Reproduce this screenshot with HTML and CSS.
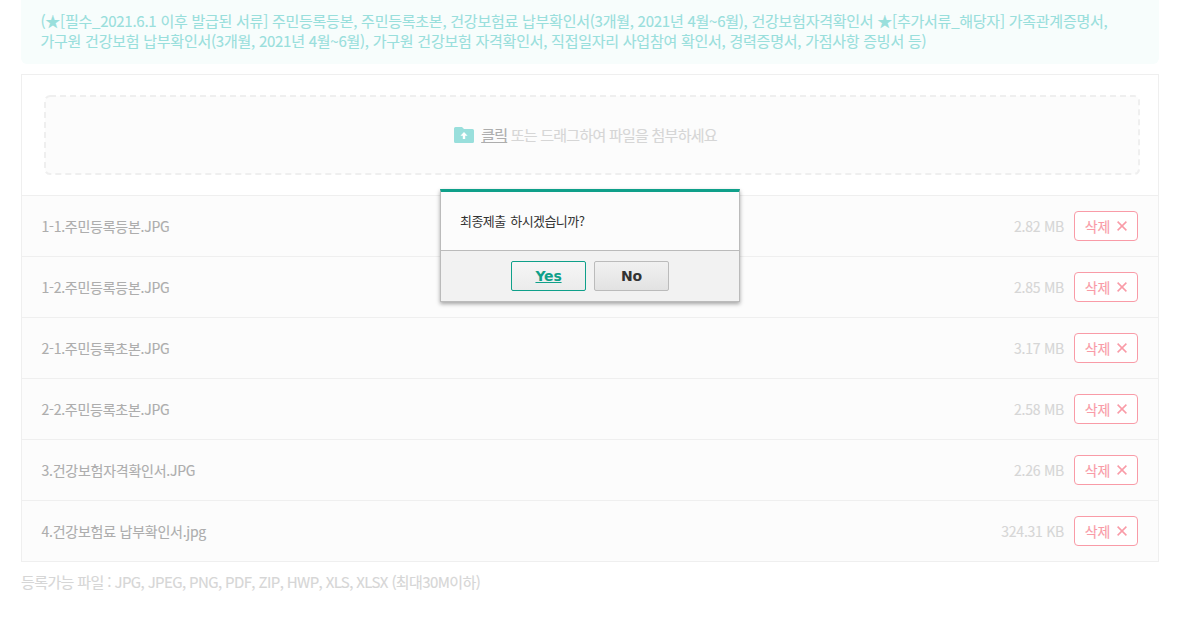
FILE: index.html
```html
<!DOCTYPE html>
<html lang="ko">
<head>
    <meta charset="UTF-8">
    <meta name="viewport" content="width=device-width, initial-scale=1.0">
    <title>첨부파일</title>
    <link rel="stylesheet" href="styles.css">
</head>
<body>
    <svg width="0" height="0" class="symbols">
        <symbol id="icon-close" viewBox="0 0 10 10">
            <path d="M0.6 0.6L9.4 9.4M9.4 0.6L0.6 9.4" fill="none" stroke="currentColor" stroke-width="1.5"/>
        </symbol>
    </svg>

    <div class="container">
        <div class="notice">
            <p>(★[필수_2021.6.1 이후 발급된 서류] 주민등록등본, 주민등록초본, 건강보험료 납부확인서(3개월, 2021년 4월~6월), 건강보험자격확인서 ★[추가서류_해당자] 가족관계증명서,</p>
            <p>가구원 건강보험 납부확인서(3개월, 2021년 4월~6월), 가구원 건강보험 자격확인서, 직접일자리 사업참여 확인서, 경력증명서, 가점사항 증빙서 등)</p>
        </div>

        <div class="upload">
            <div class="drop-area">
                <svg class="drop-line" width="1096" height="80">
                    <rect x="1" y="1" width="1094" height="78" rx="5" fill="#fcfcfc" stroke="#efefef" stroke-width="2" stroke-dasharray="6 4"/>
                </svg>
                <svg class="folder" width="20" height="16" viewBox="0 0 20 16">
                    <path d="M1.5 0H8L10 2H18.5Q20 2 20 3.5V14.5Q20 16 18.5 16H1.5Q0 16 0 14.5V1.5Q0 0 1.5 0Z" fill="#99dfdc"/>
                    <path d="M10 5L13.6 8.8H11.2V12H8.8V8.8H6.4Z" fill="#fff"/>
                </svg>
                <p class="drop-text"><a>클릭</a> 또는 드래그하여 파일을 첨부하세요</p>
            </div>
            <ul class="file-list">
                <li><span class="name">1-1.주민등록등본.JPG</span><span class="size">2.82 MB</span><button class="delete-btn">삭제<svg><use href="#icon-close"/></svg></button></li>
                <li><span class="name">1-2.주민등록등본.JPG</span><span class="size">2.85 MB</span><button class="delete-btn">삭제<svg><use href="#icon-close"/></svg></button></li>
                <li><span class="name">2-1.주민등록초본.JPG</span><span class="size">3.17 MB</span><button class="delete-btn">삭제<svg><use href="#icon-close"/></svg></button></li>
                <li><span class="name">2-2.주민등록초본.JPG</span><span class="size">2.58 MB</span><button class="delete-btn">삭제<svg><use href="#icon-close"/></svg></button></li>
                <li><span class="name">3.건강보험자격확인서.JPG</span><span class="size">2.26 MB</span><button class="delete-btn">삭제<svg><use href="#icon-close"/></svg></button></li>
                <li><span class="name">4.건강보험료 납부확인서.jpg</span><span class="size">324.31 KB</span><button class="delete-btn">삭제<svg><use href="#icon-close"/></svg></button></li>
            </ul>
        </div>

        <p class="guide">등록가능 파일 : JPG, JPEG, PNG, PDF, ZIP, HWP, XLS, XLSX (최대30M이하)</p>
    </div>

    <div class="dialog">
        <div class="dialog-body">최종제출 하시겠습니까?</div>
        <div class="dialog-footer">
            <button class="dialog-btn yes">Yes</button>
            <button class="dialog-btn">No</button>
        </div>
    </div>
</body>
</html>
```
FILE: styles.css
```css
* {
    margin: 0;
    padding: 0;
    box-sizing: border-box;
}

body {
    font-family: 'Noto Sans CJK KR', sans-serif;
    font-size: 15px;
    background: #fff;
    height: 630px;
    overflow: hidden;
}

.symbols {
    position: absolute;
}

.container {
    width: 1138px;
    margin-left: 21px;
    -webkit-text-stroke: 0.12px;
}

.notice {
    height: 64px;
    padding: 11px 20px 0 19.5px;
    background: #f7fdfc;
    border-radius: 0 0 6px 6px;
    color: #99dfdc;
    line-height: 20px;
    letter-spacing: -0.25px;
    white-space: nowrap;
}

.upload {
    margin-top: 10px;
    border: 1px solid #efefef;
}

.drop-area {
    position: relative;
    display: flex;
    align-items: center;
    justify-content: center;
    width: 1096px;
    height: 80px;
    margin: 20px 0 20px 22px;
    padding-right: 13px;
}

.drop-line {
    position: absolute;
    top: 0;
    left: 0;
    z-index: -1;
}

.folder {
    margin-right: 7px;
}

.drop-text {
    color: #d6d6d6;
    line-height: 20px;
    letter-spacing: -0.75px;
}

.drop-text a {
    color: #adadad;
    text-decoration: underline;
}

.file-list {
    list-style: none;
}

.file-list li {
    display: flex;
    align-items: center;
    height: 61px;
    padding: 0 20px 0 19.5px;
    border-top: 1px solid #efefef;
    background: #fcfcfc;
    font-size: 14px;
    letter-spacing: -0.25px;
}

.name {
    flex: 1;
    color: #adadad;
}

.size {
    margin-right: 10px;
    color: #d6d6d6;
}

.delete-btn {
    display: flex;
    align-items: center;
    justify-content: center;
    gap: 7px;
    width: 64px;
    height: 30px;
    border: 1px solid #f99ba7;
    border-radius: 4px;
    background: #fff;
    color: #f99ba7;
    font: inherit;
    letter-spacing: inherit;
}

.delete-btn svg {
    width: 10px;
    height: 10px;
}

.guide {
    margin-top: 10px;
    color: #d6d6d6;
    line-height: 20px;
    letter-spacing: -0.61px;
}

.dialog {
    position: absolute;
    top: 189px;
    left: 440px;
    width: 300px;
    height: 113px;
    border: 1px solid #bbb;
    border-top: 3px solid #0fa08a;
    background: #f2f2f2;
    box-shadow: 0 2px 4px rgba(0, 0, 0, 0.35);
}

.dialog-body {
    height: 59px;
    padding: 19px 19px 0;
    border-bottom: 1px solid #bbb;
    background: #fcfcfc;
    color: #333;
    font-size: 13px;
    line-height: 20px;
    letter-spacing: -0.55px;
    word-spacing: 1.5px;
}

.dialog-footer {
    display: flex;
    justify-content: center;
    gap: 8px;
    padding-top: 10px;
}

.dialog-btn {
    width: 75px;
    height: 30px;
    border: 1px solid #bbb;
    border-radius: 2px;
    background: linear-gradient(#f1f1f1, #e2e2e2);
    color: #333;
    font: bold 14px 'DejaVu Sans', sans-serif;
    letter-spacing: -0.2px;
}

.dialog-btn.yes {
    border-color: #0fa08a;
    background: linear-gradient(#f6f6f6, #ebebeb);
    color: #0fa08a;
    text-decoration: underline;
}
```
